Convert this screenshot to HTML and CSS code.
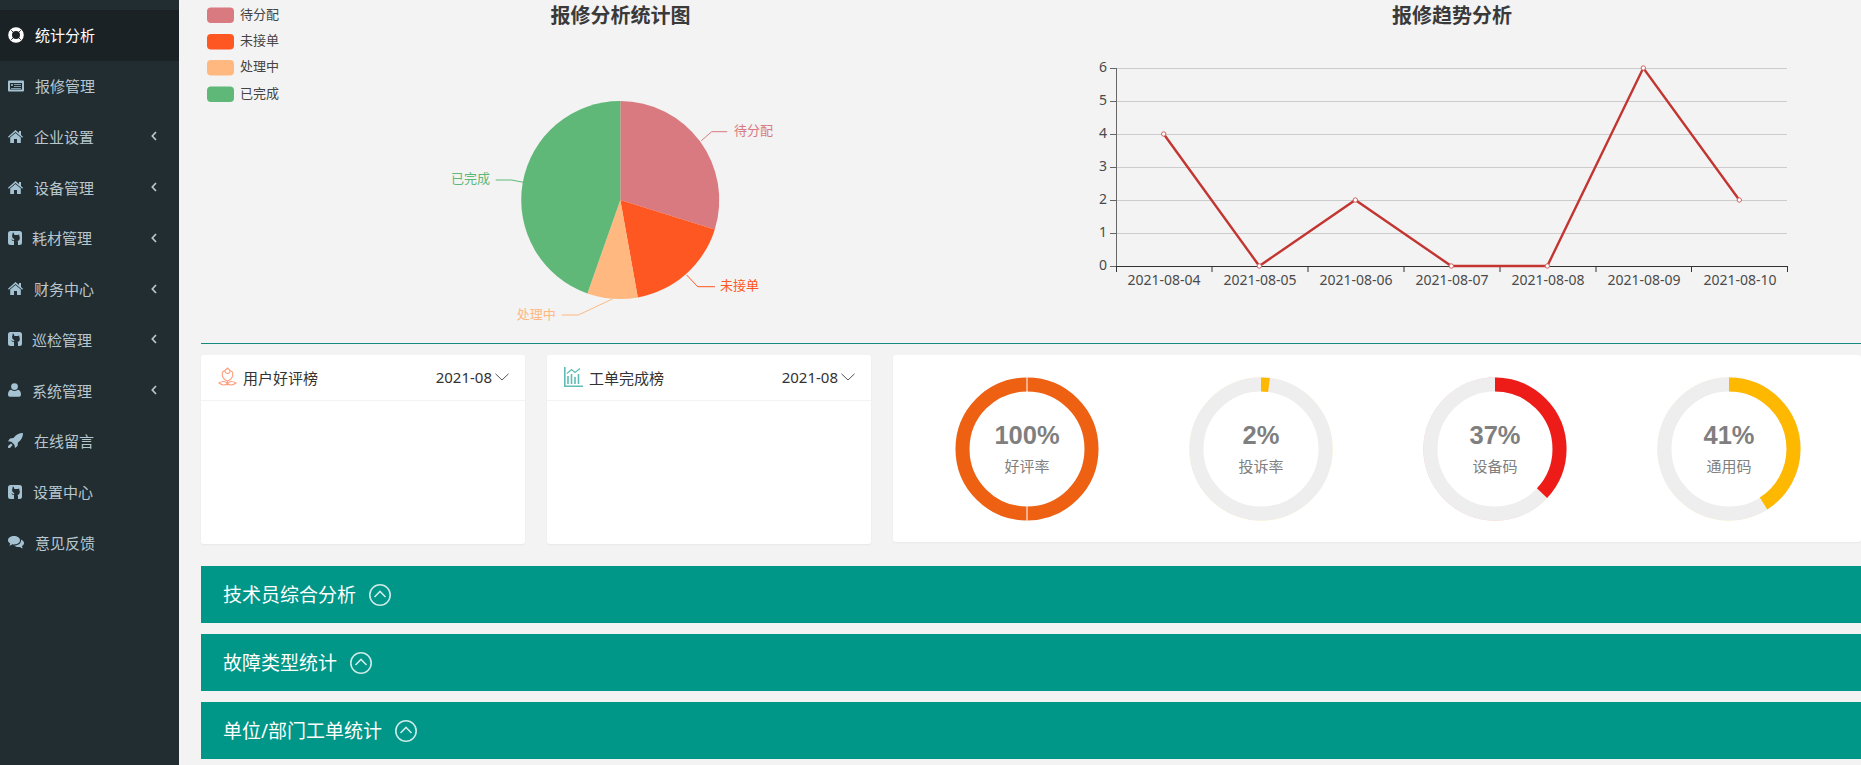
FILE: index.html
```html
<!DOCTYPE html>
<html lang="zh-CN">
<head>
    <meta charset="UTF-8">
    <title>统计分析</title>
    <link rel="stylesheet" href="styles.css">
</head>
<body>
<div class="app">
    <aside class="sidebar">
        <a class="menu-item active">
            <svg class="mi w16" viewBox="0 0 16 16"><circle cx="8" cy="8" r="5.900" fill="none" stroke="currentColor" stroke-width="3.800"/><path d="M3.200 3.200l2 2M12.800 3.200l-2 2M3.200 12.800l2-2M12.800 12.800l-2-2" stroke="#1a2226" stroke-width=".9"/></svg>
            <span>统计分析</span>
        </a>
        <a class="menu-item">
            <svg class="mi w16" viewBox="0 0 16 14"><path fill-rule="evenodd" fill="currentColor" d="M1 1.500h14a1 1 0 0 1 1 1v9a1 1 0 0 1-1 1H1a1 1 0 0 1-1-1v-9a1 1 0 0 1 1-1zM2 4v6.500h12V4z"/><path d="M3 5h2v2H3zM6 5h7v1H6zM6 7h7v1H6zM3 9h10v1H3z" fill="currentColor" opacity=".75"/></svg>
            <span>报修管理</span>
        </a>
        <a class="menu-item">
            <svg class="mi w14" viewBox="0 0 15 13"><use href="#i-home"/></svg>
            <span>企业设置</span>
            <svg class="arrow" viewBox="0 0 6 10"><path d="M5 1L1.300 5 5 9"/></svg>
        </a>
        <a class="menu-item">
            <svg class="mi w14" viewBox="0 0 15 13"><use href="#i-home"/></svg>
            <span>设备管理</span>
            <svg class="arrow" viewBox="0 0 6 10"><path d="M5 1L1.300 5 5 9"/></svg>
        </a>
        <a class="menu-item">
            <svg class="mi w14g" viewBox="0 0 14 14"><use href="#i-git"/></svg>
            <span>耗材管理</span>
            <svg class="arrow" viewBox="0 0 6 10"><path d="M5 1L1.300 5 5 9"/></svg>
        </a>
        <a class="menu-item">
            <svg class="mi w14" viewBox="0 0 15 13"><use href="#i-home"/></svg>
            <span>财务中心</span>
            <svg class="arrow" viewBox="0 0 6 10"><path d="M5 1L1.300 5 5 9"/></svg>
        </a>
        <a class="menu-item">
            <svg class="mi w14g" viewBox="0 0 14 14"><use href="#i-git"/></svg>
            <span>巡检管理</span>
            <svg class="arrow" viewBox="0 0 6 10"><path d="M5 1L1.300 5 5 9"/></svg>
        </a>
        <a class="menu-item">
            <svg class="mi w13" viewBox="0 0 13 14"><circle cx="6.500" cy="3.600" r="3.400" fill="currentColor"/><path fill="currentColor" d="M0 11.500C0 8.500 1.500 6.800 3.300 6.800c1 .8 2 1.200 3.200 1.200s2.200-.4 3.200-1.200C11.500 6.800 13 8.500 13 11.500c0 1.500-1 2.300-2.300 2.300H2.300C1 13.800 0 13 0 11.500z"/></svg>
            <span>系统管理</span>
            <svg class="arrow" viewBox="0 0 6 10"><path d="M5 1L1.300 5 5 9"/></svg>
        </a>
        <a class="menu-item">
            <svg class="mi w15" viewBox="0 0 15 15"><path fill="currentColor" d="M15 0c0 4-1.500 7-5 9.500L9.500 13 7 15l-.6-3.200L3.300 8.700 0 8.200 2 5.500 5.500 5C8 1.500 11 0 15 0zM3 10.500l1.600 1.600L2 15l-1.800.2L0 13z"/></svg>
            <span>在线留言</span>
        </a>
        <a class="menu-item">
            <svg class="mi w14s" viewBox="0 0 14 14"><use href="#i-git"/></svg>
            <span>设置中心</span>
        </a>
        <a class="menu-item">
            <svg class="mi w16" viewBox="0 0 16 14"><path fill="currentColor" d="M6 1c3.300 0 6 1.800 6 4.200S9.300 9.400 6 9.400c-.6 0-1.100 0-1.700-.2C3.400 10 2.400 10.400 1.200 10.600c.5-.7.900-1.400 1-2.200C.8 7.600 0 6.500 0 5.200 0 2.800 2.700 1 6 1z"/><path fill="currentColor" d="M13 4.600c1.800.7 3 2 3 3.500 0 1.200-.8 2.300-2.100 3 .1.800.5 1.500 1 2.200-1.100-.2-2.100-.7-3-1.400-.5.100-1 .2-1.600.2-1.700 0-3.200-.6-4.200-1.500 4 .2 7.500-2 6.900-6z"/></svg>
            <span>意见反馈</span>
        </a>
    </aside>

    <main class="main">
        <section class="charts">
            <svg class="chart-pie" viewBox="201 0 838 343">
                <text class="chart-title" x="620.500" y="23" text-anchor="middle">报修分析统计图</text>

                <rect x="207" y="7.500" width="27" height="15.500" rx="4" fill="#d87a80"/>
                <rect x="207" y="34" width="27" height="15.500" rx="4" fill="#ff5722"/>
                <rect x="207" y="60" width="27" height="15.500" rx="4" fill="#ffb980"/>
                <rect x="207" y="86.500" width="27" height="15.500" rx="4" fill="#5fb878"/>
                <text class="legend" x="240" y="19">待分配</text>
                <text class="legend" x="240" y="45">未接单</text>
                <text class="legend" x="240" y="71">处理中</text>
                <text class="legend" x="240" y="98">已完成</text>

                <path d="M620.300 200V101A99 99 0 0 1 714.800 229.400Z" fill="#d87a80"/>
                <path d="M620.300 200L714.800 229.400A99 99 0 0 1 637.800 297.400Z" fill="#ff5722"/>
                <path d="M620.300 200L637.800 297.400A99 99 0 0 1 587.400 293.400Z" fill="#ffb980"/>
                <path d="M620.300 200L587.400 293.400A99 99 0 0 1 620.300 101Z" fill="#5fb878"/>

                <path class="leader" stroke="#d87a80" d="M701.300 140.700l10.400-9h15.600"/>
                <path class="leader" stroke="#ff5722" d="M686.700 275l11 11.700H715"/>
                <path class="leader" stroke="#ffb980" d="M612.300 299l-34 16h-16.600"/>
                <path class="leader" stroke="#5fb878" d="M523.300 182.300l-11.600-2.300h-16"/>
                <text class="pie-label" x="734" y="135" fill="#d87a80">待分配</text>
                <text class="pie-label" x="720" y="290" fill="#ff5722">未接单</text>
                <text class="pie-label" x="555.700" y="319" fill="#ffb980" text-anchor="end">处理中</text>
                <text class="pie-label" x="490" y="183" fill="#5fb878" text-anchor="end">已完成</text>
            </svg>

            <svg class="chart-line" viewBox="1039 0 822 343">
                <text class="chart-title" x="1452" y="23" text-anchor="middle">报修趋势分析</text>

                <path class="grid" d="M1116 68.500H1787M1116 101.500H1787M1116 134.500H1787M1116 167.500H1787M1116 200.500H1787M1116 233.500H1787"/>
                <path class="axis-y" d="M1116.500 68V266.500M1110 68.500h6M1110 101.500h6M1110 134.500h6M1110 167.500h6M1110 200.500h6M1110 233.500h6M1110 266.500h6"/>
                <path class="axis-x" d="M1116 266.500H1787.500M1116.500 266v6M1212 266v6M1308 266v6M1404 266v6M1500 266v6M1596 266v6M1691.500 266v6M1787.500 266v6"/>

                <text class="tick" x="1107" y="71.500" text-anchor="end">6</text>
                <text class="tick" x="1107" y="104.500" text-anchor="end">5</text>
                <text class="tick" x="1107" y="137.500" text-anchor="end">4</text>
                <text class="tick" x="1107" y="170.500" text-anchor="end">3</text>
                <text class="tick" x="1107" y="203.500" text-anchor="end">2</text>
                <text class="tick" x="1107" y="236.500" text-anchor="end">1</text>
                <text class="tick" x="1107" y="269.500" text-anchor="end">0</text>

                <text class="tick" x="1164" y="285" text-anchor="middle">2021-08-04</text>
                <text class="tick" x="1260" y="285" text-anchor="middle">2021-08-05</text>
                <text class="tick" x="1356" y="285" text-anchor="middle">2021-08-06</text>
                <text class="tick" x="1452" y="285" text-anchor="middle">2021-08-07</text>
                <text class="tick" x="1548" y="285" text-anchor="middle">2021-08-08</text>
                <text class="tick" x="1644" y="285" text-anchor="middle">2021-08-09</text>
                <text class="tick" x="1740" y="285" text-anchor="middle">2021-08-10</text>

                <polyline class="series" points="1163.700,134 1259.300,266 1355.300,200 1451.300,266 1547.300,266 1643.300,68 1739.300,200"/>
                <g class="dots">
                    <circle cx="1163.700" cy="134" r="2.200"/>
                    <circle cx="1259.300" cy="266" r="2.200"/>
                    <circle cx="1355.300" cy="200" r="2.200"/>
                    <circle cx="1451.300" cy="266" r="2.200"/>
                    <circle cx="1547.300" cy="266" r="2.200"/>
                    <circle cx="1643.300" cy="68" r="2.200"/>
                    <circle cx="1739.300" cy="200" r="2.200"/>
                </g>
            </svg>
        </section>

        <section class="cards">
            <div class="card rank">
                <div class="rank-head">
                    <svg class="rank-icon" viewBox="0 0 19 19" fill="none" stroke="#ff9f7f" stroke-width="1.100">
                        <path d="M4.500 4.500L7 3l2.500-2.500L12 3l2.500 1.500c.8 3-.2 8-5 9-4.800-1-5.800-6-5-9z"/>
                        <path d="M7 3c-.5 1.500 1 3 2.500 3S12.500 4.500 12 3"/>
                        <path d="M9.500 13.500V18M9.500 16c-2-2.500-5-2.500-8.500-.5 2.500 2 6 2.500 8.500.5zM9.500 16c2-2.500 5-2.500 8.500-.5-2.500 2-6 2.500-8.500.5z"/>
                    </svg>
                    <span class="rank-title">用户好评榜</span>
                    <span class="rank-date">2021-08</span>
                    <svg class="rank-arrow" viewBox="0 0 14 8"><path d="M.5.8L7 7 13.500.8"/></svg>
                </div>
            </div>
            <div class="card rank">
                <div class="rank-head">
                    <svg class="rank-icon" viewBox="0 0 19 20" fill="none" stroke="#5fbdb5">
                        <path d="M.8 0v19.200H19" stroke-width="1.600"/>
                        <path d="M4 17V9M7.500 17V7M11 17v-7M14.500 17V7" stroke-width="1.600"/>
                        <path d="M3 6.500L7.500 2.500 11 5.500 16 1.500" stroke-width="1.200"/>
                    </svg>
                    <span class="rank-title">工单完成榜</span>
                    <span class="rank-date">2021-08</span>
                    <svg class="rank-arrow" viewBox="0 0 14 8"><path d="M.5.8L7 7 13.500.8"/></svg>
                </div>
            </div>
            <div class="card rates">
                <div class="rate">
                    <svg class="ring" viewBox="0 0 144 144">
                        <circle class="ring-bg" cx="72" cy="72" r="64.500"/>
                        <circle class="ring-val" cx="72" cy="72" r="64.500" stroke="#ee6012"/>
                        <path d="M72 0v15M72 129v15" stroke="#fff"/>
                    </svg>
                    <div class="rate-text"><b>100%</b><span>好评率</span></div>
                </div>
                <div class="rate">
                    <svg class="ring" viewBox="0 0 144 144">
                        <circle class="ring-edge" cx="72" cy="72" r="71.200" stroke="#ffb800"/>
                        <circle class="ring-bg" cx="72" cy="72" r="64.500"/>
                        <circle class="ring-val" cx="72" cy="72" r="64.500" stroke="#ffb800" pathLength="100" stroke-dasharray="2 98"/>
                    </svg>
                    <div class="rate-text"><b>2%</b><span>投诉率</span></div>
                </div>
                <div class="rate">
                    <svg class="ring" viewBox="0 0 144 144">
                        <circle class="ring-edge" cx="72" cy="72" r="71.200" stroke="#ed1c1c"/>
                        <circle class="ring-bg" cx="72" cy="72" r="64.500"/>
                        <circle class="ring-val" cx="72" cy="72" r="64.500" stroke="#ed1c18" pathLength="100" stroke-dasharray="37 63"/>
                    </svg>
                    <div class="rate-text"><b>37%</b><span>设备码</span></div>
                </div>
                <div class="rate">
                    <svg class="ring" viewBox="0 0 144 144">
                        <circle class="ring-edge" cx="72" cy="72" r="71.200" stroke="#ffb800"/>
                        <circle class="ring-bg" cx="72" cy="72" r="64.500"/>
                        <circle class="ring-val" cx="72" cy="72" r="64.500" stroke="#ffb800" pathLength="100" stroke-dasharray="41 59"/>
                    </svg>
                    <div class="rate-text"><b>41%</b><span>通用码</span></div>
                </div>
            </div>
        </section>

        <section class="banners">
            <div class="banner"><span class="banner-text">技术员综合分析</span><svg class="up" viewBox="0 0 22 22"><circle cx="11" cy="11" r="10.200"/><path d="M5.500 13L11 7.500 16.500 13"/></svg></div>
            <div class="banner"><span class="banner-text">故障类型统计</span><svg class="up" viewBox="0 0 22 22"><circle cx="11" cy="11" r="10.200"/><path d="M5.500 13L11 7.500 16.500 13"/></svg></div>
            <div class="banner"><span class="banner-text">单位/部门工单统计</span><svg class="up" viewBox="0 0 22 22"><circle cx="11" cy="11" r="10.200"/><path d="M5.500 13L11 7.500 16.500 13"/></svg></div>
        </section>
    </main>
</div>

<svg class="defs" width="0" height="0">
    <defs>
        <path id="i-home" fill="currentColor" d="M7.500 0L11 3V1h2v4l2 1.800-.8.9L7.500 2 .8 7.700 0 6.800zM2.200 7.500L7.500 3l5.300 4.500V13H9V9H6v4H2.200z"/>
        <path id="i-git" fill="currentColor" fill-rule="evenodd" d="M2.500 0h9A2.500 2.500 0 0 1 14 2.500v9a2.500 2.500 0 0 1-2.500 2.500H10v-2.500c0-.8-.2-1.300-.6-1.600 1.400-.2 2.400-1 2.400-3.200 0-.7-.2-1.300-.6-1.700.2-.5.1-1.100-.1-1.500-.5 0-1 .2-1.500.6a6 6 0 0 0-3.200 0C5.900 1.700 5.300 1.500 4.800 1.500c-.2.400-.3 1-.1 1.500-.4.400-.6 1-.6 1.700 0 2.200 1 3 2.400 3.200-.3.300-.5.600-.5 1-.6.300-1.400.2-1.800-.5l-1 .1c.6 1.200 1.700 1.500 2.800 1.200V14H2.500A2.500 2.500 0 0 1 0 11.500v-9A2.500 2.500 0 0 1 2.500 0z"/>
    </defs>
</svg>
</body>
</html>
```

FILE: styles.css
```css
* {
    box-sizing: border-box;
}
html, body {
    margin: 0;
    height: 100%;
    overflow: hidden;
}
body {
    background-color: #f3f3f3;
    font-family: "Noto Sans", "Noto Sans CJK SC", sans-serif;
    color: #333;
}
.defs {
    display: block;
    height: 0;
}
.app {
    display: flex;
    height: 765px;
}

/* menu */
.sidebar {
    width: 179px;
    flex: none;
    padding-top: 10px;
    background-color: #222d32;
}
.menu-item {
    display: flex;
    align-items: center;
    height: 50.750px;
    padding: 0 22px 1px 8px;
    color: #b8c7ce;
    font-size: 15px;
    gap: 11px;
}
.menu-item.active {
    background-color: #1a2226;
    color: #fff;
}
.mi {
    flex: none;
    color: #a4c2d2;
}
.active .mi {
    color: #fff;
}
.w16 { width: 16px; }
.w15 { width: 15px; }
.w14 { width: 15px; }
.w14g { width: 14px; margin-right: -1px; }
.w14s { width: 14px; }
.w13 { width: 13px; }
.arrow {
    width: 6px;
    height: 10px;
    margin-left: auto;
    fill: none;
    stroke: #b8c7ce;
    stroke-width: 1.700;
}

/* charts */
.main {
    flex: 1;
    min-width: 0;
    padding-left: 22px;
}
.charts {
    display: flex;
    height: 344px;
    border-bottom: 1px solid #16897e;
}
.chart-pie {
    width: 838px;
    height: 343px;
    flex: none;
}
.chart-line {
    width: 822px;
    height: 343px;
    flex: none;
}
.chart-title {
    font-size: 20px;
    font-weight: bold;
    fill: #3a3a3a;
}
.legend {
    font-size: 13px;
    fill: #444;
}
.pie-label {
    font-size: 13px;
}
.leader {
    fill: none;
    stroke-width: 1;
}
.grid {
    fill: none;
    stroke: #ccc;
}
.axis-y {
    fill: none;
    stroke: #666;
}
.axis-x {
    fill: none;
    stroke: #333;
}
.tick {
    font-size: 14px;
    fill: #4a4a4a;
}
.series {
    fill: none;
    stroke: #c23531;
    stroke-width: 2.400;
}
.dots circle {
    fill: #fff;
    stroke: #d5605c;
    stroke-width: 1;
}

/* cards */
.cards {
    display: flex;
    align-items: flex-start;
    gap: 22px;
    margin-top: 11px;
}
.card {
    background-color: #fff;
    border-radius: 3px;
    box-shadow: 0 1px 2px rgba(0, 0, 0, 0.05);
}
.rank {
    width: 324px;
    height: 189px;
    flex: none;
}
.rank-head {
    display: flex;
    align-items: center;
    height: 46px;
    padding: 0 16px 1px 17px;
    border-bottom: 1px solid #f3f3f3;
}
.rank-icon {
    width: 19px;
    height: 20px;
    flex: none;
}
.rank-title {
    margin-left: 6px;
    font-size: 15px;
}
.rank-date {
    margin-left: auto;
    font-size: 15px;
}
.rank-arrow {
    width: 14px;
    height: 8px;
    margin-left: 3px;
    fill: none;
    stroke: #555;
    stroke-width: 1;
}
.rates {
    flex: 1;
    display: flex;
    height: 187px;
    padding-left: 17px;
}
.rate {
    width: 234px;
    display: grid;
    justify-items: center;
    align-items: center;
}
.rate > * {
    grid-area: 1 / 1;
}
.ring {
    width: 144px;
    height: 144px;
}
.ring circle {
    fill: none;
}
.ring-bg {
    stroke: #eee;
    stroke-width: 14;
}
.ring-val {
    stroke-width: 14;
    transform: rotate(-90deg);
    transform-origin: 72px 72px;
}
.ring-edge {
    stroke-width: 0.600;
    stroke-opacity: 0.4;
}
.rate-text {
    display: flex;
    flex-direction: column;
    align-items: center;
    color: #7f7f7f;
}
.rate-text b {
    font-family: "Liberation Sans", sans-serif;
    font-size: 25.500px;
    line-height: 30px;
}
.rate-text span {
    margin-top: 5px;
    font-size: 15px;
    line-height: 22px;
}

/* banners */
.banners {
    margin-top: 22px;
}
.banner {
    display: flex;
    align-items: center;
    gap: 13px;
    height: 57px;
    margin-bottom: 11px;
    padding-left: 22px;
    background-color: #009688;
    color: #fff;
    font-size: 19px;
}
.banner-text {
    padding-bottom: 2px;
}
.up {
    width: 22px;
    height: 22px;
    fill: none;
    stroke: rgba(255, 255, 255, 0.8);
    stroke-width: 1.600;
}
```
